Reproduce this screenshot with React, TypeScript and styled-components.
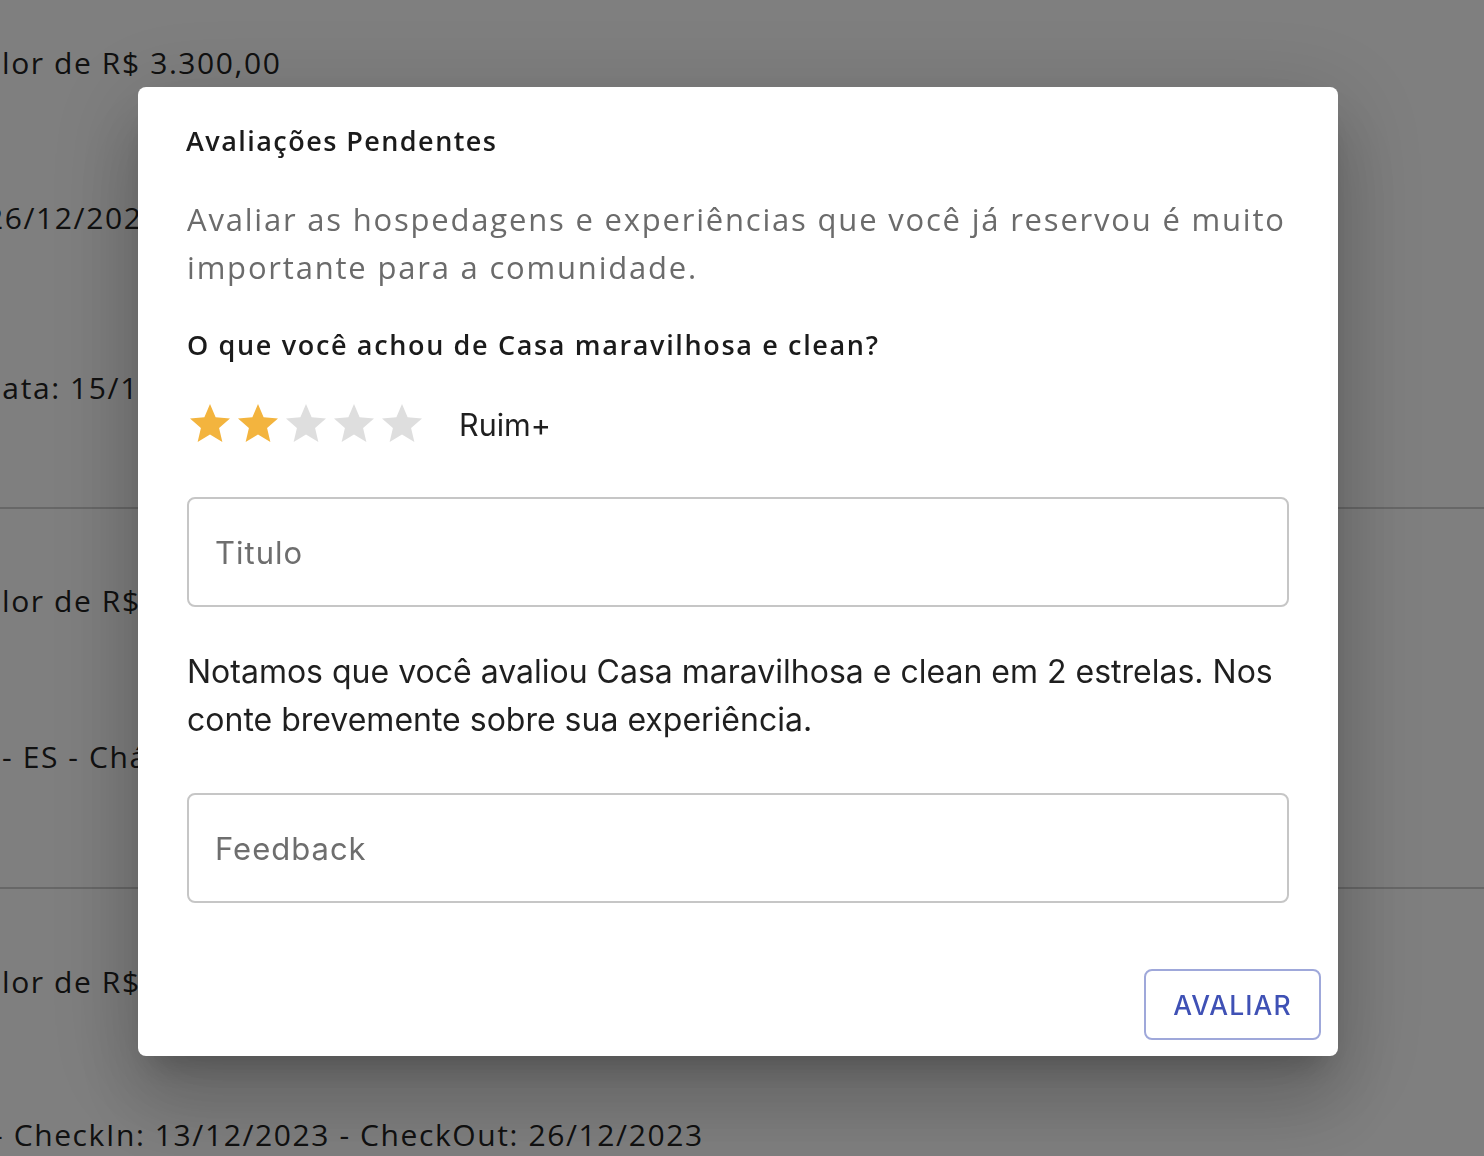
import React from "react";
import styled, { createGlobalStyle } from "styled-components";

const GlobalStyle = createGlobalStyle`
  html, body { margin: 0; padding: 0; background: #ffffff; }
  body { font-family: "Open Sans", "Liberation Sans", sans-serif; overflow: hidden; }
  * { box-sizing: border-box; }
`;

const Page = styled.div`
  width: 1484px;
  height: 1156px;
  padding-top: 43px;
  overflow: hidden;
  background: #ffffff;
`;

const Line = styled.div<{ $space: number; $indent?: number }>`
  margin-top: ${(p) => p.$space}px;
  margin-left: ${(p) => p.$indent ?? 2}px;
  height: 40px;
  line-height: 40px;
  font-family: "Open Sans", "Liberation Sans", sans-serif;
  font-size: 30px;
  letter-spacing: 1.6px;
  color: #222222;
  white-space: nowrap;
`;

const Divider = styled.div<{ $space: number }>`
  margin-top: ${(p) => p.$space}px;
  height: 2px;
  background: #cfcfcf;
`;

const Backdrop = styled.div`
  position: fixed;
  inset: 0;
  background: rgba(0, 0, 0, 0.5);
  display: flex;
  align-items: flex-start;
  padding: 87px 0 0 138px;
`;

const Dialog = styled.div`
  width: 1200px;
  background: #ffffff;
  border-radius: 8px;
  box-shadow: 0 22px 30px -14px rgba(0, 0, 0, 0.2),
    0 48px 76px 6px rgba(0, 0, 0, 0.14), 0 18px 92px 16px rgba(0, 0, 0, 0.12);
  display: flex;
  flex-direction: column;
`;

const Title = styled.h2`
  margin: 0;
  padding: 32px 48px 0;
  height: 76px;
  line-height: 44px;
  font-family: "Open Sans", "Liberation Sans", sans-serif;
  font-weight: 600;
  font-size: 27px;
  letter-spacing: 1.45px;
  color: #1b1b1b;
`;

const Content = styled.div`
  padding: 32px 49px 50px 49px;
  display: flex;
  flex-direction: column;
`;

const Lead = styled.p`
  margin: 0;
  font-family: "Open Sans", "Liberation Sans", sans-serif;
  font-size: 31px;
  letter-spacing: 1.8px;
  line-height: 48px;
  color: #6b6b6b;
`;

const Question = styled.h3`
  margin: 33px 0 0;
  height: 42px;
  line-height: 42px;
  font-family: "Open Sans", "Liberation Sans", sans-serif;
  font-weight: 600;
  font-size: 27px;
  letter-spacing: 1.65px;
  color: #1b1b1b;
`;

const RatingRow = styled.div`
  margin: 34px 0 0 -1px;
  display: flex;
  align-items: center;
  height: 48px;
`;

const Stars = styled.div`
  display: flex;
`;

const StarIcon = styled.svg<{ $on: boolean }>`
  width: 48px;
  height: 48px;
  display: block;
  fill: ${(p) => (p.$on ? "#f3b43e" : "#dedede")};
`;

const RatingLabel = styled.span`
  margin-left: 33px;
  font-family: "Inter", "Liberation Sans", sans-serif;
  font-size: 30.5px;
  color: #1f1f1f;
`;

const Field = styled.div<{ $space: number }>`
  margin-top: ${(p) => p.$space}px;
  height: 110px;
  border: 2px solid #c6c6c6;
  border-radius: 8px;
  display: flex;
  align-items: center;
  padding: 0 26px;
  font-family: "Inter", "Liberation Sans", sans-serif;
  font-size: 31px;
  letter-spacing: 1px;
  color: #6e6e6e;
`;

const Body = styled.p`
  margin: 41px 0 0;
  font-family: "Inter", "Liberation Sans", sans-serif;
  font-size: 32px;
  line-height: 48px;
  color: #1f1f1f;
`;

const Actions = styled.div`
  display: flex;
  justify-content: flex-end;
  padding: 16px 17px 16px 16px;
`;

const OutlineButton = styled.button`
  width: 177px;
  height: 71px;
  border: 2px solid rgba(63, 81, 181, 0.5);
  border-radius: 8px;
  background: transparent;
  color: #3f51b5;
  font-family: "Inter", "Liberation Sans", sans-serif;
  font-weight: 500;
  font-size: 26.5px;
  letter-spacing: 1.1px;
  text-transform: uppercase;
  cursor: pointer;
`;

const STAR = "M12 17.27L18.18 21l-1.64-7.03L22 9.24l-7.19-.61L12 2 9.19 8.63 2 9.24l5.46 4.73L5.82 21z";

export default function App() {
  const rating = 2;
  return (
    <>
      <GlobalStyle />
      <Page>
        <Line $space={0}>lor de R$ 3.300,00</Line>
        <Line $space={115} $indent={-14}>26/12/2023</Line>
        <Line $space={130} $indent={-21}>Data: 15/12/2023</Line>
        <Divider $space={99} />
        <Line $space={72}>lor de R$ 3.300,00</Line>
        <Line $space={116}>- ES - Chácara</Line>
        <Divider $space={110} />
        <Line $space={73}>lor de R$ 3.300,00</Line>
        <Line $space={113} $indent={-7}>- CheckIn: 13/12/2023 - CheckOut: 26/12/2023</Line>
      </Page>
      <Backdrop>
        <Dialog role="dialog">
          <Title>Avaliações Pendentes</Title>
          <Content>
            <Lead>
              Avaliar as hospedagens e experiências que você já reservou é muito
              importante para a comunidade.
            </Lead>
            <Question>O que você achou de Casa maravilhosa e clean?</Question>
            <RatingRow>
              <Stars>
                {[1, 2, 3, 4, 5].map((i) => (
                  <StarIcon key={i} viewBox="0 0 24 24" $on={i <= rating}>
                    <path d={STAR} />
                  </StarIcon>
                ))}
              </Stars>
              <RatingLabel>Ruim+</RatingLabel>
            </RatingRow>
            <Field $space={49}>Titulo</Field>
            <Body>
              Notamos que você avaliou Casa maravilhosa e clean em 2 estrelas. Nos
              conte brevemente sobre sua experiência.
            </Body>
            <Field $space={49}>Feedback</Field>
          </Content>
          <Actions>
            <OutlineButton>Avaliar</OutlineButton>
          </Actions>
        </Dialog>
      </Backdrop>
    </>
  );
}
